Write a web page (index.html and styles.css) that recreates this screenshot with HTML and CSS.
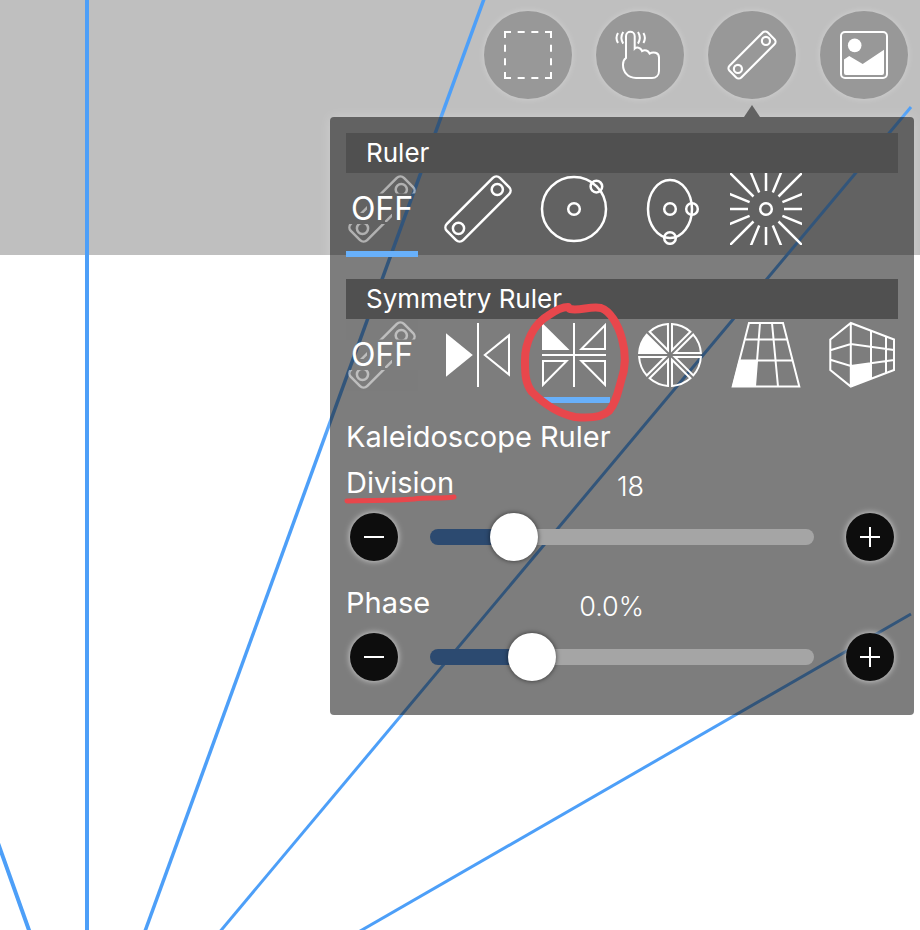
FILE: index.html
```html
<!DOCTYPE html>
<html lang="en">
<head>
    <meta charset="UTF-8">
    <title>Ruler settings</title>
    <link rel="stylesheet" href="styles.css">
</head>
<body>
<!-- shared icons -->
<svg class="defs" aria-hidden="true">
    <symbol id="i-ruler" viewBox="0 0 72 72">
        <rect x="-1.5" y="24.5" width="75" height="23" rx="5" transform="rotate(-45 36 36)"/>
        <circle cx="55.3" cy="16.5" r="5.6"/>
        <circle cx="16.5" cy="55.3" r="5.6"/>
    </symbol>
    <!-- keeps the ruler clear of the OFF label -->
    <clipPath id="off-clip">
        <path d="M0 0H72V20.5H0ZM0 51H72V72H0ZM39 41H46V49H39ZM14 33H21V40H14Z"/>
    </clipPath>
    <symbol id="i-off" viewBox="0 0 72 72">
        <g clip-path="url(#off-clip)" opacity="0.5">
            <use href="#i-ruler" width="72" height="72"/>
        </g>
    </symbol>
    <path id="slice" d="M4.8 2H30.9A31 31 0 0 1 23.3 20.4Z"/>
</svg>

<div class="canvas">
    <svg class="guides" aria-hidden="true">
        <line x1="-2" y1="843" x2="30" y2="933" stroke-width="4"/>
        <line x1="87" y1="0" x2="87" y2="4000" stroke-width="4"/>
        <line x1="484" y1="-1" x2="144" y2="934" stroke-width="3.5"/>
        <line x1="911" y1="107" x2="218" y2="934"/>
        <line x1="911" y1="614" x2="355" y2="934"/>
    </svg>
</div>

<div class="toolbar">
    <button type="button" class="tool" aria-label="Selection">
        <svg class="icon" viewBox="0 0 48 48">
            <path stroke-dasharray="7 6.67" d="M0 1H48M0 47H48M1 0V48M47 0V48"/>
        </svg>
    </button>
    <button type="button" class="tool" aria-label="Touch">
        <svg class="icon" viewBox="0 0 48 48">
            <path d="M10 27V5.2C10 -0.6 18.7 -0.6 18.7 5.2V17.6C20.5 15.8 24.6 16.2 26 20C29 18.4 32.2 19.4 33.6 22.6C37 20.4 43 21.4 43 26.5V40C43 44.2 40 47 36 47H20C11.5 47 7 40.5 7 34C7 31 6.8 29.2 10 27Z"/>
            <path d="M7.2 1Q3.6 6.8 7.2 12.6M2 2Q-1 7 2 12M22 1Q25.6 6.8 22 12.6M27.4 2Q30.4 7 27.4 12"/>
        </svg>
    </button>
    <button type="button" class="tool" aria-label="Ruler">
        <svg class="icon icon-ruler"><use href="#i-ruler"/></svg>
    </button>
    <button type="button" class="tool" aria-label="Image">
        <svg class="icon" viewBox="0 0 48 48">
            <rect x="1" y="1" width="46" height="46" rx="4"/>
            <circle class="solid" cx="14.7" cy="14.4" r="6.8"/>
            <path class="solid" d="M4 28.4L9.2 25L22.7 33L44 18.7V42Q44 44 42 44H6Q4 44 4 42Z"/>
        </svg>
    </button>
</div>

<div class="panel">
    <h2 class="bar">Ruler</h2>
    <div class="tabs">
        <button type="button" class="tab active" aria-label="Off">
            <svg viewBox="0 0 72 72"><use href="#i-off"/><text class="off" x="36" y="47" text-anchor="middle">OFF</text></svg>
        </button>
        <button type="button" class="tab" aria-label="Straight">
            <svg viewBox="0 0 72 72"><use href="#i-ruler"/></svg>
        </button>
        <button type="button" class="tab" aria-label="Circle">
            <svg viewBox="0 0 72 72">
                <circle cx="36" cy="36" r="32"/>
                <circle cx="36" cy="36" r="5.8"/>
                <circle cx="58.4" cy="13.6" r="5.8"/>
            </svg>
        </button>
        <button type="button" class="tab" aria-label="Ellipse">
            <svg viewBox="0 0 72 72">
                <ellipse cx="36" cy="36" rx="22" ry="29"/>
                <circle cx="36" cy="36" r="5.8"/>
                <circle cx="58" cy="36" r="5.8"/>
                <circle cx="36" cy="65" r="5.8"/>
            </svg>
        </button>
        <button type="button" class="tab" aria-label="Radial">
            <svg viewBox="0 0 72 72">
                <circle cx="36" cy="36" r="5.8"/>
                <path d="M36 0V18M36 54V72M0 36H18M54 36H72M-1 -1L23.5 23.5M73 -1L48.5 23.5M-1 73L23.5 48.5M73 73L48.5 48.5"/>
                <path d="M20.7 -1L29.2 19.6M51.3 -1L42.8 19.6M20.7 73L29.2 52.4M51.3 73L42.8 52.4M-1 20.7L19.6 29.2M-1 51.3L19.6 42.8M73 20.7L52.4 29.2M73 51.3L52.4 42.8"/>
            </svg>
        </button>
    </div>

    <h2 class="bar">Symmetry Ruler</h2>
    <div class="tabs">
        <button type="button" class="tab" aria-label="Off">
            <svg viewBox="0 0 72 72"><use href="#i-off"/><text class="off" x="36" y="47" text-anchor="middle">OFF</text></svg>
        </button>
        <button type="button" class="tab thin" aria-label="Mirror">
            <svg viewBox="0 0 72 72">
                <path class="solid" d="M4 14.3L30.8 36L4 57.7Z"/>
                <path d="M36 4V68M67 16.4L42.8 36L67 55.6Z"/>
            </svg>
        </button>
        <button type="button" class="tab thin active" aria-label="Kaleidoscope">
            <svg viewBox="0 0 72 72">
                <path class="solid" d="M4 3.7L31.5 31H4Z"/>
                <path d="M36 4V68M4 36H68M67 6.2V30H43.4ZM5 42H28.6L5 65.8ZM67 42H43.4L67 65.8Z"/>
            </svg>
        </button>
        <button type="button" class="tab thin" aria-label="Rotation">
            <svg viewBox="0 0 72 72">
                <g transform="translate(36 36)">
                    <use href="#slice"/>
                    <use href="#slice" transform="rotate(45)"/>
                    <use href="#slice" transform="rotate(90)"/>
                    <use href="#slice" transform="rotate(135)"/>
                    <use href="#slice" transform="rotate(180)" fill="#fff"/>
                    <use href="#slice" transform="rotate(225)"/>
                    <use href="#slice" transform="rotate(270)"/>
                    <use href="#slice" transform="rotate(315)"/>
                </g>
            </svg>
        </button>
        <button type="button" class="tab thin" aria-label="Perspective array, flat">
            <svg viewBox="0 0 72 72">
                <path d="M19 4H53L69.3 67.5H2.7ZM14.5 20.5H57.5M9 41.5H63M30 4L25 67.5M42 4L48 67.5"/>
                <path class="solid" d="M8.7 41.5H27L25 68H2Z"/>
            </svg>
        </button>
        <button type="button" class="tab thin" aria-label="Perspective array, cube">
            <svg viewBox="0 0 72 72">
                <path d="M4.3 20.5L24.8 4L68 20.5V51L24.8 67.5L4.3 51ZM24.8 4V67.5M45 12V59.5M60 17.5V54.5M4.3 31.3L24.8 25L68 31M4.3 40.7L24.8 47L68 41"/>
                <path class="solid" d="M24.8 47L45.6 44V59.6L24.8 68Z"/>
            </svg>
        </button>
    </div>

    <h3 class="title">Kaleidoscope Ruler</h3>
    <div class="head">
        <label for="division">Division</label>
        <output for="division">18</output>
    </div>
    <div class="control">
        <button type="button" class="step" aria-label="Decrease division">
            <svg viewBox="0 0 20 20"><path d="M0 10H20"/></svg>
        </button>
        <input type="range" id="division" min="3" max="87" value="18" style="--fill: 22%">
        <button type="button" class="step" aria-label="Increase division">
            <svg viewBox="0 0 20 20"><path d="M0 10H20M10 0V20"/></svg>
        </button>
    </div>
    <div class="head">
        <label for="phase">Phase</label>
        <output for="phase">0.0%</output>
    </div>
    <div class="control">
        <button type="button" class="step" aria-label="Decrease phase">
            <svg viewBox="0 0 20 20"><path d="M0 10H20"/></svg>
        </button>
        <input type="range" id="phase" min="-232" max="768" value="0" style="--fill: 27%">
        <button type="button" class="step" aria-label="Increase phase">
            <svg viewBox="0 0 20 20"><path d="M0 10H20M10 0V20"/></svg>
        </button>
    </div>

    <!-- red pen marks, in panel coordinates -->
    <svg class="marks" viewBox="0 0 584 598" aria-hidden="true">
        <path stroke-width="8" d="M240 192C250 194 260 189 271 191C280 194 288 207 292 222C296 236 296 250 291 264C288 275 286 286 279 294C270 302 255 301 245 300C230 297 214 287 202 275C195 266 195 256 195 243C195 226 203 207 219 198C226 193 232 190 238 190"/>
        <path stroke-width="5" d="M17 384C40 383 62 384 84 382C98 380 112 382 124 380"/>
    </svg>
</div>
</body>
</html>
```

FILE: styles.css
```css
* {
    margin: 0;
    border: 0;
    padding: 0;
    box-sizing: border-box;
}
html, body {
    height: 100%;
}
body {
    position: relative;
    overflow: hidden;
    background-color: #fff;
    color: #fff;
    font-family: Inter, "Liberation Sans", sans-serif;
}
button {
    background: none;
    color: inherit;
    font: inherit;
}
svg {
    display: block;
    fill: none;
    stroke: #fff;
    stroke-width: 2.5;
}
.solid {
    fill: #fff;
    stroke: none;
}
.defs {
    position: absolute;
    width: 0;
    height: 0;
}

/* drawing area */
.canvas {
    position: absolute;
    inset: 0;
    z-index: -1;
    background: linear-gradient(#bfbfbf 255px, #fff 255px);
}
.guides {
    width: 100%;
    height: 100%;
    stroke: #4d9ff8;
    stroke-width: 3;
}

/* top tools */
.toolbar {
    display: flex;
    justify-content: flex-end;
    gap: 24px;
    padding: 11px 12px 18px;
}
.tool {
    display: flex;
    align-items: center;
    justify-content: center;
    width: 88px;
    height: 88px;
    border-radius: 50%;
    background-color: #989898;
    box-shadow: 0 0 6px rgba(255, 255, 255, 0.3);
}
.icon {
    width: 48px;
    height: 48px;
    stroke-width: 2;
    overflow: visible;
}
.icon-ruler {
    width: 52px;
    height: 52px;
    stroke-width: 3;
}

/* popup */
.panel {
    position: relative;
    max-width: 584px;
    margin: 0 6px 0 auto;
    padding: 16px 16px 34px;
    border-radius: 4px;
    background-color: rgba(31, 31, 31, 0.58);
    box-shadow: 0 0 12px rgba(255, 255, 255, 0.25);
}
.panel::before {
    content: "";
    position: absolute;
    right: 154px;
    bottom: 100%;
    border: 8px solid transparent;
    border-top: 0;
    border-bottom: 12px solid #626262;
}
.bar {
    padding-left: 20px;
    background-color: #505050;
    font-size: 26px;
    font-weight: 400;
    line-height: 40px;
}
.tabs {
    display: flex;
    gap: 24px;
}
.tabs + .bar {
    margin-top: 22px;
}
.tab {
    width: 72px;
    padding-bottom: 6px;
    border-bottom: 6px solid transparent;
}
.tab svg {
    width: 72px;
    height: 72px;
}
.tab.active {
    border-bottom-color: #68b0fa;
}
.thin svg {
    stroke-width: 2;
}
.off {
    fill: #fff;
    stroke: none;
    font-size: 32px;
}

/* settings */
.title, .head {
    font-size: 29px;
    font-weight: 400;
    line-height: 46px;
}
.title {
    margin-top: 11px;
}
.head {
    display: flex;
    justify-content: space-between;
    align-items: flex-end;
    width: 54%;
    margin-bottom: 7px;
}
.head output {
    font-size: 27px;
    font-weight: 300;
    line-height: 38px;
}
.control {
    display: flex;
    align-items: center;
    gap: 32px;
    padding: 0 4px;
}
.control + .head {
    margin-top: 19px;
}
.step {
    display: flex;
    align-items: center;
    justify-content: center;
    flex-shrink: 0;
    width: 48px;
    height: 48px;
    border-radius: 50%;
    background-color: #0d0d0d;
    box-shadow: 0 0 6px rgba(255, 255, 255, 0.7);
}
.step svg {
    width: 20px;
    height: 20px;
    stroke-width: 2;
}
input[type="range"] {
    -webkit-appearance: none;
    appearance: none;
    flex: 1;
    min-width: 0;
    height: 48px;
    background: none;
}
input[type="range"]::-webkit-slider-runnable-track {
    height: 16px;
    border-radius: 8px;
    background: linear-gradient(to right, #2c4a70 var(--fill), #a5a5a5 var(--fill));
}
input[type="range"]::-webkit-slider-thumb {
    -webkit-appearance: none;
    width: 48px;
    height: 48px;
    margin-top: -16px;
    border-radius: 50%;
    background-color: #fff;
    box-shadow: 0 0 5px rgba(0, 0, 0, 0.6);
}

.marks {
    position: absolute;
    top: 0;
    left: 0;
    width: 584px;
    height: 598px;
    stroke: #e8474c;
    stroke-linecap: round;
    stroke-linejoin: round;
    pointer-events: none;
}
```
